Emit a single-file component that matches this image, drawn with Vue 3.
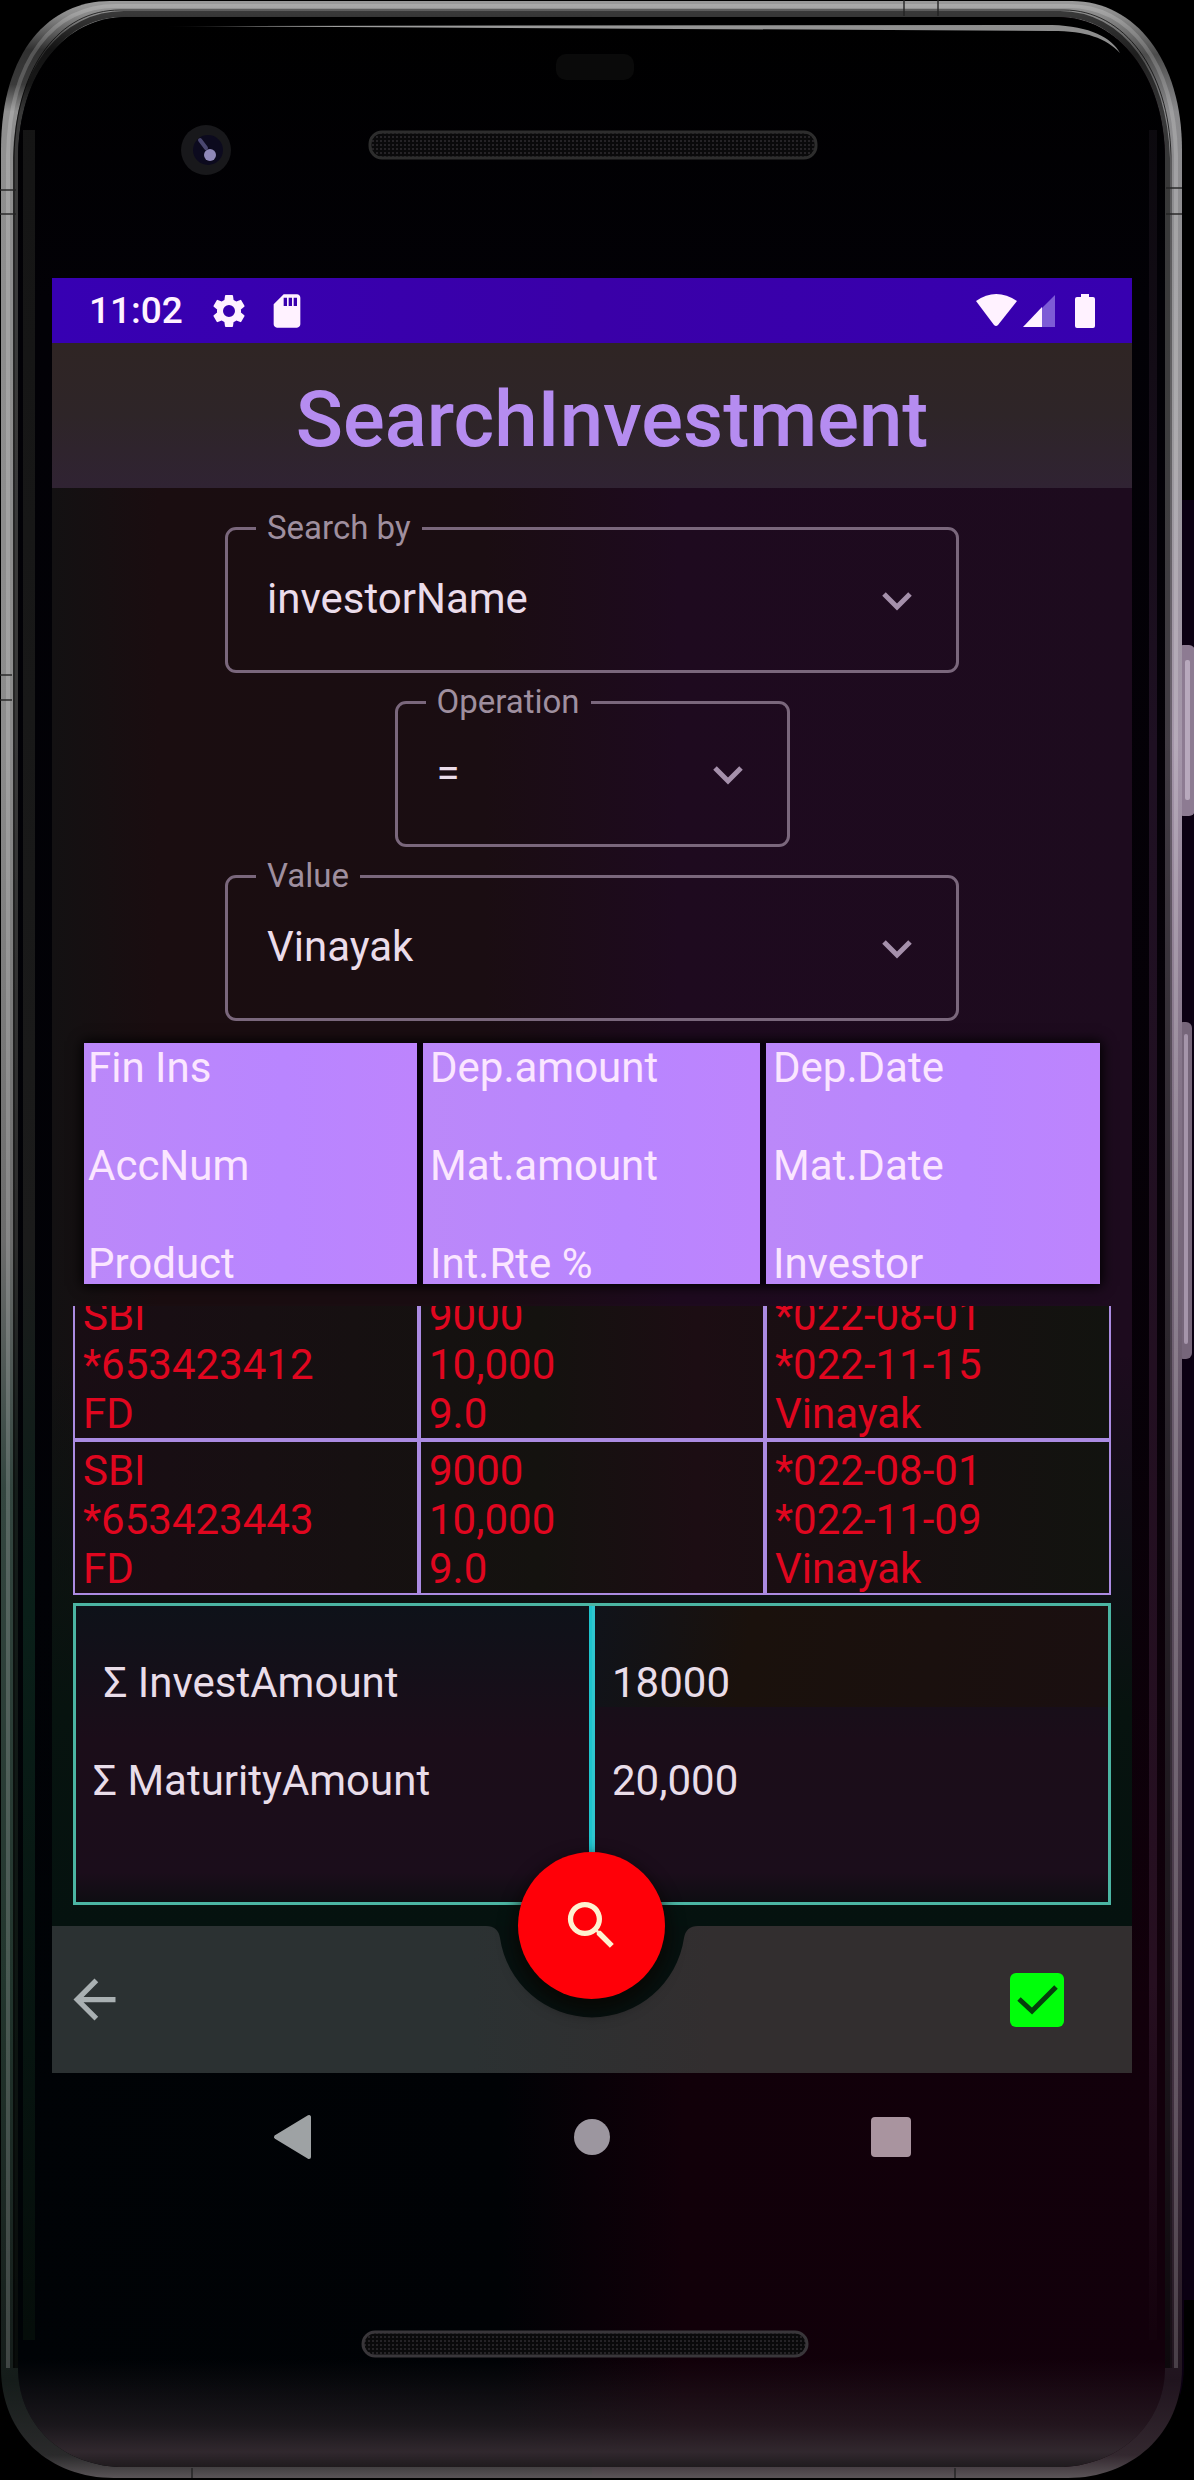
<script setup>
import { ref } from 'vue'

const fields = ref([
  { id: 'search-by', label: 'Search by', value: 'investorName', narrow: false },
  { id: 'operation', label: 'Operation', value: '=', narrow: true },
  { id: 'value', label: 'Value', value: 'Vinayak', narrow: false },
])

const headers = [
  ['Fin Ins', 'AccNum', 'Product'],
  ['Dep.amount', 'Mat.amount', 'Int.Rte %'],
  ['Dep.Date', 'Mat.Date', 'Investor'],
]

const rows = [
  [['SBI', '*653423412', 'FD'], ['9000', '10,000', '9.0'], ['*022-08-01', '*022-11-15', 'Vinayak']],
  [['SBI', '*653423443', 'FD'], ['9000', '10,000', '9.0'], ['*022-08-01', '*022-11-09', 'Vinayak']],
]

const totals = [
  { label: ' Σ InvestAmount', amount: '18000' },
  { label: 'Σ MaturityAmount', amount: '20,000' },
]

const selected = ref(true)
</script>

<template>
  <div class="device">
    <svg class="shell" viewBox="0 0 1194 2480" preserveAspectRatio="none" aria-hidden="true">
      <defs>
        <linearGradient id="metalL" x1="0" y1="0" x2="0" y2="2480" gradientUnits="userSpaceOnUse">
          <stop offset="0" stop-color="#9c9c9c" />
          <stop offset="0.006" stop-color="#8a8a8a" />
          <stop offset="0.02" stop-color="#303030" />
          <stop offset="0.034" stop-color="#3a3a3a" />
          <stop offset="0.045" stop-color="#8f8f8f" />
          <stop offset="0.3" stop-color="#8c8c8c" />
          <stop offset="0.5" stop-color="#6c6c6c" />
          <stop offset="0.6" stop-color="#344640" />
          <stop offset="0.8" stop-color="#22352d" />
          <stop offset="0.96" stop-color="#151c1a" />
          <stop offset="0.99" stop-color="#2a2a2b" />
          <stop offset="1" stop-color="#5e585b" />
        </linearGradient>
        <linearGradient id="metalR" x1="0" y1="0" x2="0" y2="2480" gradientUnits="userSpaceOnUse">
          <stop offset="0" stop-color="#9c9c9c" />
          <stop offset="0.006" stop-color="#8a8a8a" />
          <stop offset="0.022" stop-color="#4c4c4c" />
          <stop offset="0.045" stop-color="#8a8a8c" />
          <stop offset="0.18" stop-color="#9a989c" />
          <stop offset="0.3" stop-color="#a596aa" />
          <stop offset="0.43" stop-color="#857589" />
          <stop offset="0.65" stop-color="#5a4c5c" />
          <stop offset="0.85" stop-color="#3f2f3e" />
          <stop offset="0.96" stop-color="#20141e" />
          <stop offset="0.99" stop-color="#33282f" />
          <stop offset="1" stop-color="#5e585b" />
        </linearGradient>
        <linearGradient id="backH" x1="0" y1="0" x2="1" y2="0">
          <stop offset="0" stop-color="#000306" />
          <stop offset="0.42" stop-color="#000205" />
          <stop offset="0.58" stop-color="#110009" />
          <stop offset="1" stop-color="#12000b" />
        </linearGradient>
        <linearGradient id="topFade" x1="0" y1="0" x2="0" y2="1">
          <stop offset="0" stop-color="#000" />
          <stop offset="0.12" stop-color="#020106" />
          <stop offset="0.6" stop-color="#020106" stop-opacity="0.7" />
          <stop offset="0.85" stop-color="#020106" stop-opacity="0" />
        </linearGradient>
        <linearGradient id="chin" x1="0" y1="2360" x2="0" y2="2468" gradientUnits="userSpaceOnUse">
          <stop offset="0" stop-color="#332a30" stop-opacity="0" />
          <stop offset="0.6" stop-color="#332a30" stop-opacity="0.5" />
          <stop offset="0.85" stop-color="#332a30" stop-opacity="0.95" />
          <stop offset="1" stop-color="#1e1a1d" />
        </linearGradient>
        <linearGradient id="glint" x1="160" y1="0" x2="1120" y2="0" gradientUnits="userSpaceOnUse">
          <stop offset="0" stop-color="#bbb" stop-opacity="0" />
          <stop offset="0.1" stop-color="#a0a0a0" />
          <stop offset="1" stop-color="#8c8c8c" />
        </linearGradient>
        <linearGradient id="rimL" x1="0" y1="0" x2="0" y2="2480" gradientUnits="userSpaceOnUse">
          <stop offset="0" stop-color="#141414" />
          <stop offset="0.5" stop-color="#1b1b1b" />
          <stop offset="0.65" stop-color="#0a1f19" />
          <stop offset="0.94" stop-color="#050d0a" />
        </linearGradient>
        <linearGradient id="rimR" x1="0" y1="0" x2="0" y2="2480" gradientUnits="userSpaceOnUse">
          <stop offset="0" stop-color="#08080a" />
          <stop offset="0.3" stop-color="#1e1022" />
          <stop offset="0.8" stop-color="#260f20" />
          <stop offset="0.94" stop-color="#14020d" />
        </linearGradient>
        <pattern id="mesh" width="4" height="4" patternUnits="userSpaceOnUse">
          <rect width="4" height="4" fill="#0a0a0b" />
          <rect width="2" height="2" fill="#252326" />
        </pattern>
        <clipPath id="left"><rect x="0" y="0" width="592" height="2480" /></clipPath>
        <clipPath id="right"><rect x="592" y="0" width="602" height="2480" /></clipPath>
      </defs>

      <rect x="1180" y="500" width="14" height="1980" fill="#0b0012" />
      <rect x="1177" y="645" width="18" height="171" rx="6" fill="#8d7b92" />
      <rect x="1185" y="660" width="5" height="140" rx="2" fill="#b8a9bd" />
      <rect x="1177" y="1022" width="15" height="337" rx="6" fill="#76667a" />
      <rect x="1184" y="1034" width="4" height="310" rx="2" fill="#a595aa" />

      <path fill="#000" d="M1040 2480H1194V2300H1184V2368C1182 2435 1130 2478 1068 2480Z" />
      <g>
        <path clip-path="url(#left)" fill="url(#metalL)" d="M1 150C1 50 50 1 110 1H1072C1135 1 1182 60 1182 150V2368C1182 2435 1130 2478 1068 2478H114C50 2478 1 2435 1 2368Z" />
        <path clip-path="url(#right)" fill="url(#metalR)" d="M1 150C1 50 50 1 110 1H1072C1135 1 1182 60 1182 150V2368C1182 2435 1130 2478 1068 2478H114C50 2478 1 2435 1 2368Z" />
        <path d="M8 2368V155C10 58 54 6 116 6H1068C1130 6 1174 62 1176 155V2368" fill="none" stroke="#fff" stroke-opacity="0.18" stroke-width="4" />
        <path d="M16 2368V158C18 68 64 14 124 14H1060C1120 14 1164 72 1167 158V2368" fill="none" stroke="#000" stroke-opacity="0.6" stroke-width="6" />
        <path d="M14 2368V156C16 66 60 10 120 10H1064C1124 10 1169 70 1171 156V2368" fill="none" stroke="#000" stroke-opacity="0.7" stroke-width="1" />
        <path d="M0 190H16M0 214H16M0 675H12M0 700H12M1166 188H1182M1166 214H1182M904 0V16M938 0V16M192 2468V2478M955 2468V2478" stroke="#222" stroke-opacity="0.7" stroke-width="2" />
      </g>

      <path fill="url(#backH)" d="M18 160C18 72 66 17 126 17H1058C1118 17 1165 76 1165 160V2368C1165 2426 1116 2467 1058 2467H124C64 2467 18 2426 18 2368Z" />
      <path fill="url(#topFade)" d="M18 160C18 72 66 17 126 17H1058C1118 17 1165 76 1165 160V2368H18Z" />
      <path fill="url(#chin)" d="M18 2340V2368C18 2426 64 2467 124 2467H1058C1116 2467 1165 2426 1165 2368V2340Z" />
      <rect x="23" y="130" width="12" height="2210" fill="url(#rimL)" />
      <rect x="1149" y="130" width="8" height="2210" fill="url(#rimR)" />
      <path d="M164 26L1052 25C1090 26 1112 38 1120 53C1106 38 1086 31 1052 31Z" fill="url(#glint)" />

      <rect x="556" y="54" width="78" height="26" rx="10" fill="#0a0a0a" />
      <circle cx="206" cy="150" r="25" fill="#18181b" />
      <circle cx="208" cy="150" r="15" fill="#0c0a1e" />
      <path d="M200 140L206 148" stroke="#4a4770" stroke-width="4" stroke-linecap="round" />
      <circle cx="210" cy="155" r="6" fill="#8f88b8" />
      <rect x="370" y="132" width="446" height="26" rx="12" fill="url(#mesh)" stroke="#2d2d2d" stroke-width="3" />
      <rect x="363" y="2332" width="444" height="24" rx="12" fill="url(#mesh)" stroke="#39363a" stroke-width="3" />
    </svg>

    <div class="screen">
      <div class="status">
        <span class="clock">11:02</span>
        <svg class="gear" width="40" height="40" viewBox="0 0 24 24" aria-hidden="true">
          <path fill="#fff2ff" d="M19.14 12.94c.04-.3.06-.61.06-.94 0-.32-.02-.64-.07-.94l2.03-1.58a.49.49 0 0 0 .12-.61l-1.92-3.32a.49.49 0 0 0-.59-.22l-2.39.96a7 7 0 0 0-1.62-.94l-.36-2.54a.48.48 0 0 0-.48-.41h-3.84a.48.48 0 0 0-.47.41l-.36 2.54c-.59.24-1.13.57-1.62.94l-2.39-.96a.48.48 0 0 0-.59.22L2.74 8.87a.48.48 0 0 0 .12.61l2.03 1.58c-.05.3-.09.63-.09.94s.02.64.07.94l-2.03 1.58a.49.49 0 0 0-.12.61l1.92 3.32c.12.22.37.29.59.22l2.39-.96c.5.38 1.03.7 1.62.94l.36 2.54c.05.24.24.41.48.41h3.84c.24 0 .44-.17.47-.41l.36-2.54a6.8 6.8 0 0 0 1.62-.94l2.39.96c.22.08.47 0 .59-.22l1.92-3.32a.48.48 0 0 0-.12-.61zM12 15.6a3.6 3.6 0 1 1 0-7.2 3.6 3.6 0 0 1 0 7.2z" />
        </svg>
        <svg width="40" height="40" viewBox="0 0 24 24" aria-hidden="true">
          <path fill="#fff2ff" d="M18 2h-8L4 8v12c0 1.100.9 2 2 2h12c1.100 0 2-.9 2-2V4c0-1.100-.9-2-2-2zm-6 7h-2V4h2zm3 0h-2V4h2zm3 0h-2V4h2z" />
        </svg>
        <span class="spring"></span>
        <svg width="41" height="33" viewBox="0 0 41 33" aria-hidden="true">
          <path fill="#fff2ff" d="M0 7Q20-7 41 7L22 31Q20 33 18 31Z" />
        </svg>
        <svg class="signal" width="32" height="33" viewBox="0 0 32 33" aria-hidden="true">
          <path fill="#7d5bd6" d="M18 15L32 1V33H18Z" />
          <path fill="#fff2ff" d="M0 33L19 13V33Z" />
        </svg>
        <svg class="battery" width="20" height="34" viewBox="0 0 20 34" aria-hidden="true">
          <path fill="#fff2ff" d="M6 0h8v3h4q2 0 2 2v27q0 2-2 2H2q-2 0-2-2V5q0-2 2-2h4Z" />
        </svg>
      </div>

      <header class="titlebar"><h1>SearchInvestment</h1></header>

      <main>
        <form class="filters" @submit.prevent>
          <fieldset v-for="f in fields" :key="f.id" class="field" :class="{ narrow: f.narrow }">
            <legend><label :for="f.id">{{ f.label }}</label></legend>
            <select :id="f.id" v-model="f.value">
              <option :value="f.value">{{ f.value }}</option>
            </select>
            <svg class="chevron" width="32" height="22" viewBox="0 0 32 22" aria-hidden="true">
              <path d="M3 3L16 16L29 3" fill="none" stroke="#a590ab" stroke-width="5" />
            </svg>
          </fieldset>
        </form>

        <table class="deposits">
          <thead>
            <tr>
              <th v-for="(col, i) in headers" :key="i" scope="col">
                <span v-for="line in col" :key="line">{{ line }}</span>
              </th>
            </tr>
          </thead>
          <tbody>
            <tr v-for="(row, r) in rows" :key="r">
              <td v-for="(cell, c) in row" :key="c">
                <span v-for="line in cell" :key="line">{{ line }}</span>
              </td>
            </tr>
          </tbody>
        </table>

        <table class="totals">
          <tbody>
            <tr v-for="t in totals" :key="t.label">
              <th scope="row">{{ t.label }}</th>
              <td>{{ t.amount }}</td>
            </tr>
          </tbody>
        </table>
      </main>

      <footer class="appbar">
        <div class="surface" aria-hidden="true">
          <div class="side"></div>
          <svg width="240" height="147" viewBox="0 0 240 147">
            <defs>
              <linearGradient id="barFill" x1="0" y1="0" x2="1" y2="0">
                <stop offset="0" stop-color="#2b3132" />
                <stop offset="1" stop-color="#322e2f" />
              </linearGradient>
            </defs>
            <path fill="url(#barFill)" d="M0 0H14Q26 0 28 12A93 93 0 0 0 212 12Q214 0 226 0H240V147H0Z" />
          </svg>
          <div class="side end"></div>
        </div>
        <button class="back" type="button" aria-label="Back">
          <svg width="63" height="63" viewBox="0 0 24 24" aria-hidden="true">
            <path fill="#a9b0b2" d="M20 11H7.830l5.590-5.590L12 4l-8 8 8 8 1.410-1.410L7.830 13H20z" />
          </svg>
        </button>
        <span class="tick">
          <input v-model="selected" type="checkbox" aria-label="Selected" />
          <svg v-if="selected" width="54" height="54" viewBox="0 0 54 54" aria-hidden="true">
            <path d="M9 26L22 38L46 14" fill="none" stroke="#063f0c" stroke-width="5" />
          </svg>
        </span>
        <button class="fab" type="button" aria-label="Search">
          <svg width="63" height="63" viewBox="0 0 24 24" aria-hidden="true">
            <path fill="#fff1d0" d="M15.500 14h-.79l-.28-.27A6.470 6.470 0 0 0 16 9.500 6.500 6.500 0 1 0 9.500 16c1.610 0 3.090-.59 4.230-1.570l.27.28v.79l5 4.990L20.490 19zm-6 0C7.010 14 5 11.990 5 9.500S7.010 5 9.500 5 14 7.010 14 9.500 11.990 14 9.500 14z" />
          </svg>
        </button>
      </footer>

      <nav class="sysnav">
        <button type="button" aria-label="System back">
          <svg width="40" height="46" viewBox="0 0 40 46"><path d="M36 3V43L3 23Z" fill="#9ea2a4" stroke="#9ea2a4" stroke-width="4" stroke-linejoin="round" /></svg>
        </button>
        <button type="button" aria-label="Home">
          <svg width="38" height="38" viewBox="0 0 38 38"><circle cx="19" cy="19" r="18" fill="#9c969f" /></svg>
        </button>
        <button type="button" aria-label="Overview">
          <svg width="40" height="40" viewBox="0 0 40 40"><rect width="40" height="40" rx="4" fill="#a9949f" /></svg>
        </button>
      </nav>
    </div>
  </div>
</template>

<style>
body {
  margin: 0;
  background: #000;
}
</style>

<style scoped>
.device {
  position: relative;
  box-sizing: border-box;
  padding: 278px 62px 280px 52px;
  font-family: Roboto, "Noto Sans", sans-serif;
  font-size: 42px;
  line-height: 49px;
  color: #e9dde9;
}
.shell {
  position: absolute;
  inset: 0;
  width: 100%;
  height: 100%;
}
.screen {
  position: relative;
}
button {
  border: 0;
  padding: 0;
  background: none;
  display: flex;
  align-items: center;
  justify-content: center;
}

.status {
  display: flex;
  align-items: center;
  height: 65px;
  padding: 0 37px;
  background: linear-gradient(90deg, #3700b3, #3a00a8 50%, #3700b0);
  color: #fff2ff;
}
.clock {
  font-size: 37px;
  font-weight: 500;
  margin-right: 26px;
}
.gear {
  margin-right: 18px;
}
.spring {
  flex: 1;
}
.signal {
  margin-left: 6px;
}
.battery {
  margin-left: 20px;
}

.titlebar {
  box-sizing: border-box;
  height: 145px;
  padding: 31px 0 0 40px;
  background: linear-gradient(#2f2524, #2e2528 50%, #302333);
  text-align: center;
}
h1 {
  margin: 0;
  font-size: 78px;
  line-height: 92px;
  font-weight: 500;
  color: #b58cf0;
}

main {
  box-sizing: border-box;
  padding: 22px 21px 21px;
  background:
    linear-gradient(transparent 60%, #07130f 85%, #05120f),
    linear-gradient(90deg, #131112, #1a0d10 10%, #1a0d12 40%, #1e0a1f 58%, #1d0b1e);
}
.filters {
  display: flex;
  flex-direction: column;
  align-items: center;
  gap: 11px;
}
.field {
  position: relative;
  box-sizing: border-box;
  width: 734px;
  max-width: 100%;
  height: 163px;
  min-width: 0;
  margin: 0;
  padding: 0;
  border: 3px solid #7a677c;
  border-radius: 11px;
}
.field.narrow {
  width: 395px;
}
legend {
  margin-left: 28px;
  padding: 0 11px;
  font-size: 33px;
  line-height: 36px;
  color: #9f8f9f;
}
legend label {
  display: block;
}
select {
  display: block;
  appearance: none;
  width: 100%;
  height: 105px;
  padding: 0 100px 0 39px;
  border: 0;
  background: none;
  font: inherit;
  color: #ebdcea;
}
.chevron {
  position: absolute;
  right: 43px;
  top: 45px;
}

.deposits {
  display: block;
  margin-top: 22px;
}
.deposits thead,
.deposits tbody {
  display: block;
}
.deposits tr {
  display: grid;
  grid-template-columns: repeat(3, 1fr);
}
.deposits th,
.deposits td {
  box-sizing: border-box;
  text-align: left;
  font-weight: 400;
}
.deposits span {
  display: block;
}
.deposits thead {
  margin: 0 11px;
  box-shadow: 0 0 12px 2px #000;
}
.deposits thead tr {
  grid-template-columns: 333fr 337fr 334fr;
  column-gap: 6px;
  background: #08000c;
}
.deposits th {
  display: flex;
  flex-direction: column;
  gap: 49px;
  height: 241px;
  padding: 0 7px;
  background: linear-gradient(90deg, #bb88f9, #b985ff 60%, #bd84fd);
  color: #fbe6ff;
}
.deposits th:first-child {
  padding-left: 4px;
}
.deposits tbody {
  display: flex;
  flex-direction: column;
  justify-content: flex-end;
  height: 289px;
  margin-top: 22px;
  overflow: hidden;
  background: linear-gradient(90deg, #190d14, #14120f 45%, #1c0d13 60%, #12130f);
}
.deposits td {
  padding: 4px 8px 0;
  border: 2px solid #ab8be2;
  color: #e0061f;
}

.totals {
  width: 100%;
  margin-top: 8px;
  border: 3px solid #4bb5a3;
  border-spacing: 0;
  table-layout: fixed;
  background: linear-gradient(#0e1219, #1b0d19 45%, #1b0d1b 90%, #0e0d12);
}
.totals th,
.totals td {
  padding: 49px 17px 0;
  text-align: left;
  font-weight: 400;
  white-space: pre;
}
.totals th {
  border-right: 3px solid #1ec3cd;
}
.totals td {
  border-left: 3px solid #2fc6cf;
}
.totals tr:first-child > * {
  padding-top: 52px;
}
.totals tr:last-child > * {
  padding-bottom: 97px;
}
.totals tr:first-child td {
  background: linear-gradient(100deg, #10131a, #1a110c 30%, #1a0f10);
}

.appbar {
  position: relative;
  display: flex;
  align-items: center;
  justify-content: space-between;
  height: 147px;
  padding: 0 68px 0 11px;
  background: #06110f;
}
.surface {
  position: absolute;
  inset: 0;
  display: flex;
}
.side {
  flex: 1;
  background: #2b3132;
}
.side.end {
  background: #322e2f;
}
.back,
.tick {
  position: relative;
}
.tick {
  display: flex;
}
.tick input {
  appearance: none;
  width: 54px;
  height: 54px;
  margin: 0;
  border-radius: 6px;
  background: #00ff0a;
}
.tick svg {
  position: absolute;
  inset: 0;
  pointer-events: none;
}
.fab {
  position: absolute;
  top: -74px;
  left: calc(50% - 74px);
  width: 147px;
  height: 147px;
  border-radius: 50%;
  background: #ff0008;
  box-shadow: 0 8px 16px 4px rgba(8, 4, 2, 0.7);
}

.sysnav {
  display: flex;
  justify-content: center;
  height: 127px;
}
.sysnav button {
  width: 299px;
}
</style>
